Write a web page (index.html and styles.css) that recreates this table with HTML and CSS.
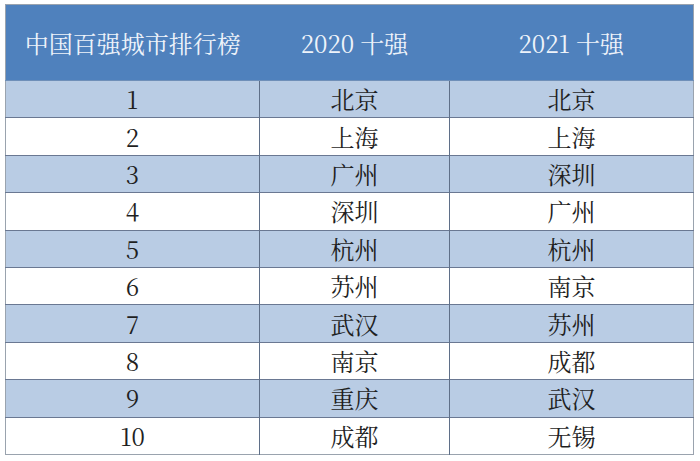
FILE: index.html
```html
<!DOCTYPE html>
<html lang="zh">
<head>
<meta charset="utf-8">
<link rel="stylesheet" href="styles.css">
</head>
<body>
<div class="wrap">
<table class="rank">
  <colgroup><col class="c1"><col class="c2"><col class="c3"></colgroup>
  <thead>
    <tr><th>中国百强城市排行榜</th><th>2020 十强</th><th>2021 十强</th></tr>
  </thead>
  <tbody>
    <tr class="alt"><td>1</td><td>北京</td><td>北京</td></tr>
    <tr><td>2</td><td>上海</td><td>上海</td></tr>
    <tr class="alt"><td>3</td><td>广州</td><td>深圳</td></tr>
    <tr><td>4</td><td>深圳</td><td>广州</td></tr>
    <tr class="alt"><td>5</td><td>杭州</td><td>杭州</td></tr>
    <tr><td>6</td><td>苏州</td><td>南京</td></tr>
    <tr class="alt"><td>7</td><td>武汉</td><td>苏州</td></tr>
    <tr><td>8</td><td>南京</td><td>成都</td></tr>
    <tr class="alt"><td>9</td><td>重庆</td><td>武汉</td></tr>
    <tr><td>10</td><td>成都</td><td>无锡</td></tr>
  </tbody>
</table>
</div>
</body>
</html>
```
FILE: styles.css
```css
html, body {
  margin: 0;
  padding: 0;
  background: #ffffff;
}
.wrap {
  padding: 4px 7px 0 5px;
}
.rank {
  width: 688px;
  border-collapse: collapse;
  table-layout: fixed;
  font-family: "Noto Serif CJK SC", "Liberation Serif", "Noto Sans CJK SC", serif;
  color: #1f1f1f;
  border: 1px solid #9aa3ae;
}
.c1 { width: 254px; }
.c2 { width: 190px; }
.c3 { width: 244px; }
.rank th {
  height: 75px;
  padding: 0;
  background: #4f81bd;
  color: #eef3fa;
  font-weight: normal;
  font-size: 24px;
  text-align: center;
  border: none;
  border-bottom: 1px solid #6f8fb8;
}
.rank td {
  height: 36.4px;
  padding: 0;
  font-size: 24px;
  text-align: center;
  border-top: 1px solid #6a7892;
  border-left: 1px solid #5f6f88;
  line-height: 1;
}
.rank td:first-child {
  border-left: none;
}
.rank tr.alt td {
  background: #b9cce4;
}
```
